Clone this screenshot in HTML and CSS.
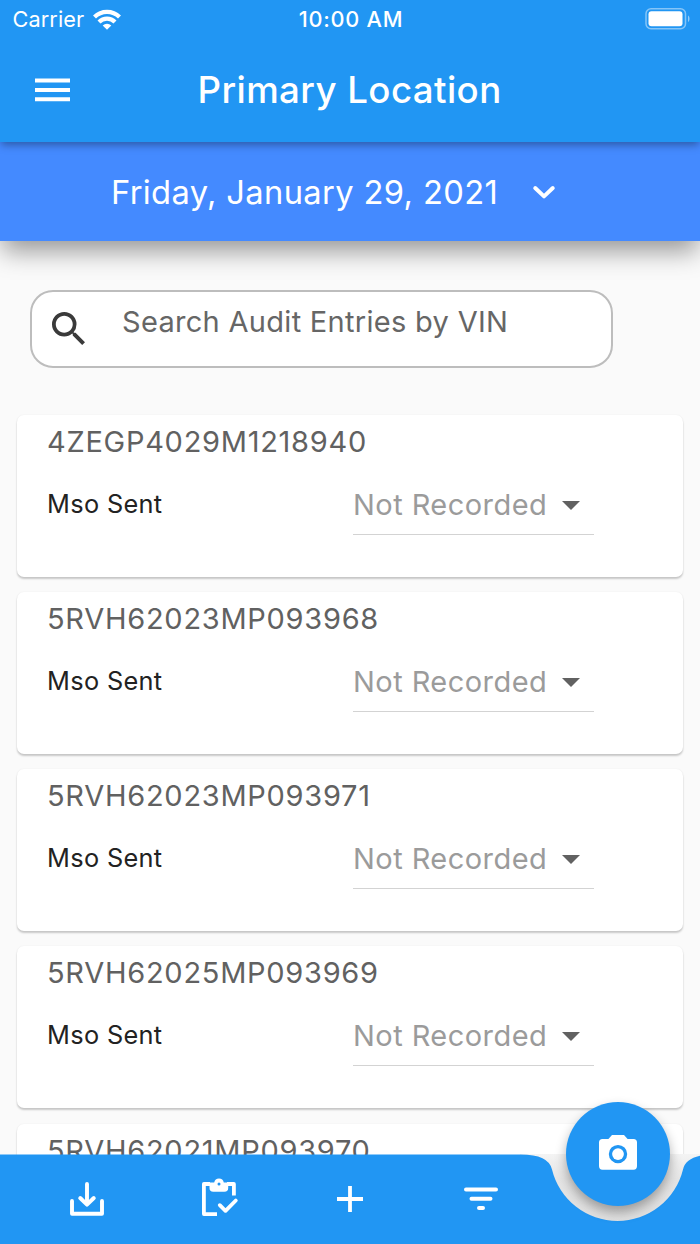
FILE: index.html
```html
<!DOCTYPE html>
<html lang="en">
<head>
<meta charset="utf-8">
<title>Primary Location</title>
<link rel="stylesheet" href="styles.css">
</head>
<body>
<div class="app">
  <header class="appbar">
    <div class="status">
      <div class="carrier"><span class="carrier-name">Carrier</span>
        <svg class="wifi" width="28" height="21" viewBox="0 0 28 21"><g fill="none" stroke="#fff" stroke-width="4.200"><path d="M1.500 8a17.700 17.700 0 0 1 25 0"/><path d="M6 12.900a11.300 11.300 0 0 1 16 0"/></g><path d="M14 20.700l-4.300-4.300a6.200 6.200 0 0 1 8.600 0z" fill="#fff"/></svg>
      </div>
      <span class="clock">10:00 AM</span>
      <svg class="battery" width="46" height="22" viewBox="0 0 46 22"><rect x="1" y=".8" width="39.500" height="20" rx="5" fill="none" stroke="#fff" stroke-opacity=".45" stroke-width="1.500"/><rect x="3.500" y="3.300" width="34" height="15" rx="3" fill="#fff"/><path d="M43 7.500c2 1 2 5.500 0 6.500z" fill="#fff" fill-opacity=".5"/></svg>
    </div>
    <div class="titlebar">
      <svg class="menu" width="35" height="24" viewBox="0 0 35 24"><path d="M0 .5h35v4H0zM0 10h35v4H0zM0 19.300h35v4H0z" fill="#fff"/></svg>
      <h1 class="title">Primary Location</h1>
    </div>
  </header>
  <div class="datebar">
    <span class="date">Friday, January 29, 2021</span>
    <svg class="chevron" width="24" height="16" viewBox="0 0 24 16"><path d="M3.200 4l8.800 8.400L20.800 4" fill="none" stroke="#fff" stroke-width="3.900" stroke-linecap="round" stroke-linejoin="round"/></svg>
  </div>
  <main class="content">
    <div class="search">
      <svg class="search-icon" width="33" height="33" viewBox="3 3 17.500 17.500"><path fill="#3a3a3a" d="M15.500 14h-.79l-.28-.27A6.470 6.470 0 0 0 16 9.500 6.500 6.500 0 1 0 9.500 16c1.610 0 3.090-.59 4.230-1.570l.27.28v.79l5 4.990L20.490 19l-4.990-5zm-6 0C7.010 14 5 11.990 5 9.500S7.010 5 9.500 5 14 7.010 14 9.500 11.990 14 9.500 14z"/></svg>
      <span class="hint">Search Audit Entries by VIN</span>
    </div>
    <div class="list">
      <article class="card"><div class="vin">4ZEGP4029M1218940</div><div class="row"><span class="label">Mso Sent</span><div class="select"><span>Not Recorded</span><i class="arrow"></i></div></div></article>
      <article class="card"><div class="vin">5RVH62023MP093968</div><div class="row"><span class="label">Mso Sent</span><div class="select"><span>Not Recorded</span><i class="arrow"></i></div></div></article>
      <article class="card"><div class="vin">5RVH62023MP093971</div><div class="row"><span class="label">Mso Sent</span><div class="select"><span>Not Recorded</span><i class="arrow"></i></div></div></article>
      <article class="card"><div class="vin">5RVH62025MP093969</div><div class="row"><span class="label">Mso Sent</span><div class="select"><span>Not Recorded</span><i class="arrow"></i></div></div></article>
      <article class="card"><div class="vin">5RVH62021MP093970</div></article>
    </div>
  </main>
  <nav class="bottom">
    <svg class="bar" width="700" height="90" viewBox="0 0 700 90">
      <defs><linearGradient id="shade" x1="0" y1="0" x2="0" y2="1"><stop offset="0" stop-color="#f4f4f4"/><stop offset=".35" stop-color="#e5e5e5"/><stop offset="1" stop-color="#e0e0e0"/></linearGradient></defs>
      <path d="M520 0H700V70H520z" fill="url(#shade)"/>
      <path d="M0 .5H520.600Q548.600 .5 552 15.500A67.400 67.400 0 0 0 683 15.500Q686.400 .5 714.400 .5V90H0z" fill="#2196f3"/>
    </svg>
    <div class="actions">
      <svg width="36" height="36" viewBox="0 0 36 36"><g fill="none" stroke="#fff" stroke-width="3.900" stroke-linecap="round" stroke-linejoin="round"><path d="M18 3v20M11.200 17l6.800 6.700 6.800-6.700"/><path d="M3 20v12.700h30V20"/></g></svg>
      <svg class="clipboard" width="38" height="40" viewBox="0 0 38 40"><g fill="none" stroke="#fff" stroke-width="3.800" stroke-linejoin="round"><path d="M17 35.100H3.900V5H10M27 5H33.900V16.500"/><path d="M19.800 26.200l5.700 5.600 10.300-10.300" stroke-linecap="round"/></g><path fill="#fff" fill-rule="evenodd" d="M9.500 3.500h4.700a4.900 4.900 0 0 1 9.600 0H28.200v5.500q0 3.800-3.800 3.800H13.300q-3.800 0-3.800-3.800zM19 3.500a1.500 1.500 0 1 0 0 3 1.500 1.500 0 0 0 0-3z"/></svg>
      <svg width="26" height="26" viewBox="0 0 26 26"><path fill="#fff" d="M11.100 0h3.800v11.100H26v3.800H14.900V26h-3.800V14.900H0v-3.800h11.100z"/></svg>
      <svg width="34" height="24" viewBox="0 0 34 24"><path d="M2 2.500h30M7.500 11.800h19M15 21.100h4" fill="none" stroke="#fff" stroke-width="4" stroke-linecap="round"/></svg>
    </div>
  </nav>
  <button class="fab" aria-label="Camera">
    <svg width="38" height="35" viewBox="0 0 38 35"><path fill="#fff" fill-rule="evenodd" d="M13 0h12l3.600 4H34.500Q38 4 38 7.500V31q0 3.700-3.500 3.700h-31Q0 34.700 0 31V7.500Q0 4 3.500 4h5.900zM19 9.900a9.200 9.200 0 1 0 0 18.400 9.200 9.200 0 0 0 0-18.400z"/><circle cx="19" cy="19.100" r="5.900" fill="#fff"/></svg>
  </button>
</div>
</body>
</html>
```
FILE: styles.css
```css
* { box-sizing: border-box; }
body { margin: 0; font-family: Inter, "Liberation Sans", sans-serif; }
svg { display: block; flex: none; }
.app { position: relative; width: 700px; height: 1244px; overflow: hidden; background: #fafafa; display: flex; flex-direction: column; }
.appbar { position: relative; z-index: 3; flex: none; height: 142px; background: #2196f3; color: #fff; box-shadow: 0 4px 8px -1px rgba(0,0,0,.35); }
.status { display: grid; grid-template-columns: 1fr auto 1fr; align-items: center; height: 38px; padding: 0 10.500px 0 12.500px; }
.carrier { display: flex; align-items: center; gap: 9px; }
.carrier-name { font-size: 21.700px; letter-spacing: .1px; }
.clock { font-size: 21.700px; font-weight: 500; letter-spacing: .75px; }
.battery { justify-self: end; margin-right: -1px; }
.titlebar { display: grid; grid-template-columns: 162.500px 1fr; align-items: center; height: 104px; padding-left: 35px; }
.title { margin: 0; font-size: 36.700px; line-height: 48px; font-weight: 550; letter-spacing: .4px; white-space: nowrap; }
.datebar { position: relative; z-index: 2; flex: none; display: flex; align-items: center; gap: 34px; height: 99px; padding: 0 0 0 111px; background: #448aff; color: #fff; box-shadow: 0 12px 24px -2px rgba(0,0,0,.4); }
.date { font-size: 32.700px; letter-spacing: .35px; white-space: nowrap; }
.content { padding: 49px 17px 0; }
.search { display: flex; align-items: center; gap: 37px; width: 583px; height: 78px; margin-left: 13px; padding-left: 20px; border: 2px solid #bdbdbd; border-radius: 23px; background: #fff; }
.search-icon { margin-top: -1px; }
.hint { margin-top: -15px; font-size: 29px; letter-spacing: .3px; color: #666; white-space: nowrap; }
.list { display: flex; flex-direction: column; gap: 15.150px; margin-top: 47px; }
.card { height: 162px; padding: 9px 30px 0; background: #fff; border-radius: 7px; box-shadow: 0 2px 2px rgba(0,0,0,.2), 0 0 2px rgba(0,0,0,.06); }
.vin { font-size: 29px; line-height: 36px; letter-spacing: .72px; color: #616161; white-space: nowrap; }
.row { display: grid; grid-template-columns: 306px 241px; align-items: center; height: 60px; margin-top: 15px; }
.label { padding-bottom: 3px; font-size: 25.300px; letter-spacing: .35px; color: #222; }
.select { display: flex; align-items: center; justify-content: space-between; height: 60px; padding-right: 14px; border-bottom: 1.500px solid #d3d3d3; color: #9b9b9b; font-size: 29px; letter-spacing: .45px; white-space: nowrap; }
.arrow { margin-top: 1px; border: 9px solid transparent; border-top-color: #616161; border-bottom: 0; }
.bottom { position: absolute; left: 0; bottom: 0; z-index: 4; width: 700px; height: 90px; }
.actions { position: absolute; inset: 0; display: grid; grid-template-columns: 111px 153px 109px 154px; justify-items: center; align-items: center; padding-left: 31px; }
.clipboard { overflow: visible; }
.fab { position: absolute; z-index: 5; left: 565.500px; top: 1102px; display: grid; place-items: center; width: 104px; height: 104px; padding: 0 0 3px; border: 0; border-radius: 50%; background: #2196f3; box-shadow: 0 6px 12px rgba(0,0,0,.32); }
```
